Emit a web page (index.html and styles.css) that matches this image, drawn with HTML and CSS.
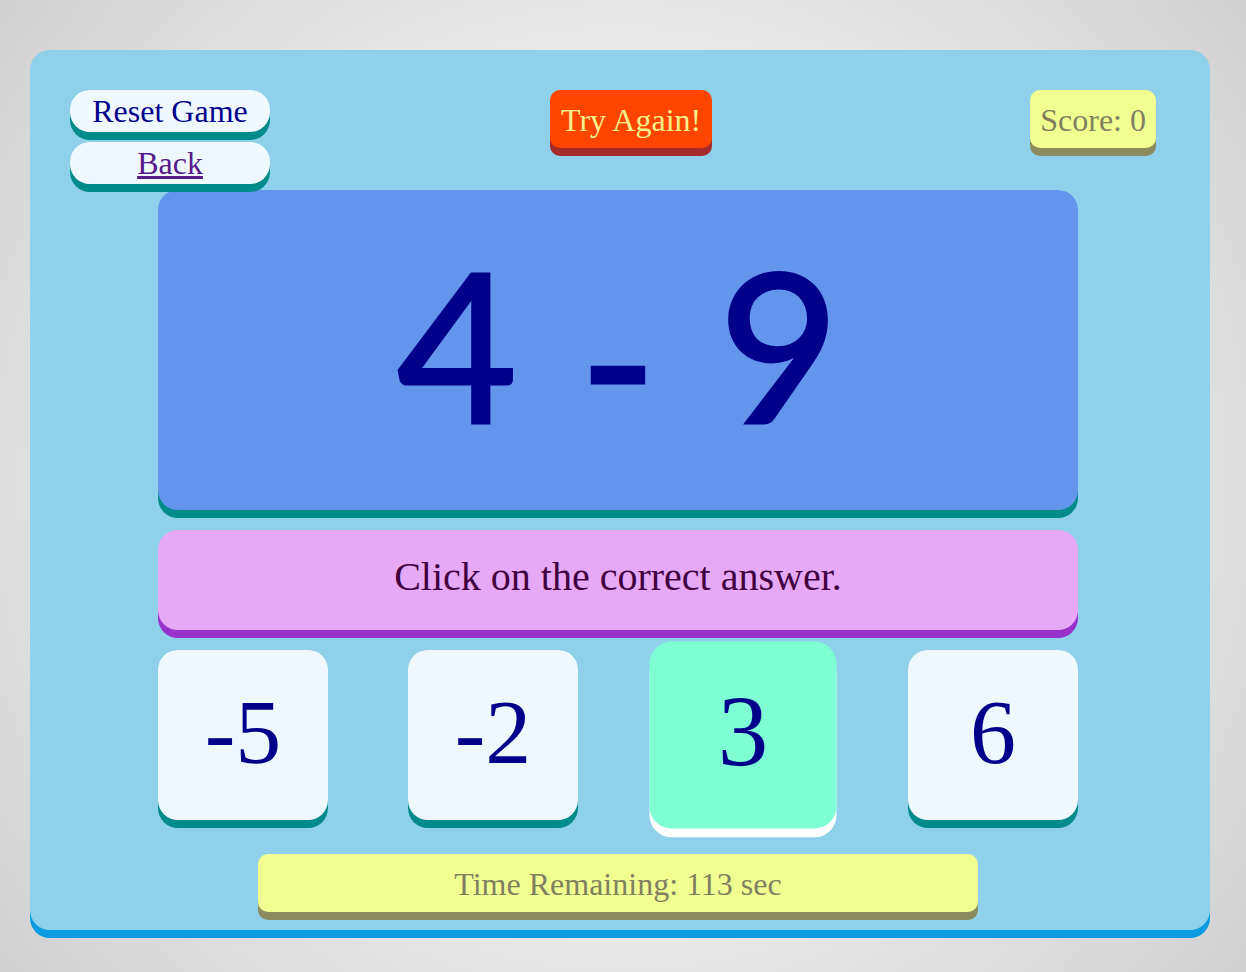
FILE: index.html
```html
<!DOCTYPE html>
<html lang="en">
<head>
  <meta charset="UTF-8">
  <meta name="viewport" content="width=device-width, initial-scale=1.0">
  <title>Subtraction Game</title>
  <link rel="stylesheet" href="styles.css">
</head>
<body>
  <div class="game-panel">
    <div class="top-row">
      <div class="nav-buttons">
        <div class="nav-button">Reset Game</div>
        <a class="nav-button back-link" href="#">Back</a>
      </div>
      <div class="try-again">Try Again!</div>
      <div class="score">Score: 0</div>
    </div>

    <div class="stage">
      <div class="question"><span>4</span><span class="operator">-</span><span>9</span></div>
      <div class="message">Click on the correct answer.</div>
      <div class="answers">
        <div class="answer">-5</div>
        <div class="answer">-2</div>
        <div class="answer selected">3</div>
        <div class="answer">6</div>
      </div>
      <div class="timer">Time Remaining: 113 sec</div>
    </div>
  </div>
</body>
</html>
```

FILE: styles.css
```css
* {
  margin: 0;
  padding: 0;
  box-sizing: border-box;
}

body {
  height: 972px;
  overflow: hidden;
  padding: 50px 36px 0 30px;
  background: radial-gradient(circle, #ffffff 18%, #d0d0d0 100%);
  font-family: "Liberation Serif", "Times New Roman", serif;
  color: #00008b;
}

.game-panel {
  width: 1180px;
  height: 880px;
  padding: 40px 54px 18px 40px;
  background: #8fd1ea;
  border-radius: 20px;
  box-shadow: 0 8px 0 #0a9be2;
}

.top-row {
  display: flex;
  align-items: flex-start;
  height: 100px;
}

.nav-buttons {
  display: flex;
  flex-direction: column;
  gap: 10px;
  width: 200px;
}

.nav-button {
  display: block;
  height: 42px;
  line-height: 43px;
  text-align: center;
  font-size: 32px;
  background: #f0f8ff;
  border-radius: 20px;
  box-shadow: 0 8px 0 #008b8b;
}

.back-link {
  color: #551a8b;
}

.try-again,
.score {
  height: 58px;
  line-height: 60px;
  font-size: 32px;
  border-radius: 10px;
}

.try-again {
  margin-left: 280px;
  padding: 0 11px;
  color: #f6f08c;
  background: #ff4500;
  box-shadow: 0 8px 0 #a52a2a;
}

.score {
  margin-left: auto;
  padding: 0 10px;
  color: #808060;
  background: #f0ff90;
  box-shadow: 0 8px 0 #8b8b5f;
}

.stage {
  width: 920px;
  margin-left: 88px;
}

.question {
  display: flex;
  justify-content: center;
  gap: 62px;
  height: 320px;
  line-height: 306px;
  margin-bottom: 20px;
  font-family: "Lato", "Comic Sans MS", sans-serif;
  font-size: 208px;
  -webkit-text-stroke: 3px #00008b;
  background: #6495ed;
  border-radius: 20px;
  box-shadow: 0 8px 0 #008b8b;
}

.operator {
  padding-top: 14px;
}

.message {
  height: 100px;
  line-height: 94px;
  margin-bottom: 20px;
  text-align: center;
  font-size: 40px;
  color: #400040;
  background: #e7a9f6;
  border-radius: 20px;
  box-shadow: 0 8px 0 #9932cc;
}

.answers {
  display: flex;
  justify-content: space-between;
  margin-bottom: 34px;
}

.answer {
  width: 170px;
  height: 170px;
  line-height: 164px;
  text-align: center;
  font-size: 92px;
  background: #f0f8ff;
  border-radius: 20px;
  box-shadow: 0 8px 0 #008b8b;
}

.answer.selected {
  background: #7fffd4;
  box-shadow: 0 8px 0 #ffffff;
  transform: scale(1.1);
}

.timer {
  width: 720px;
  height: 58px;
  line-height: 60px;
  margin: 0 auto;
  text-align: center;
  font-size: 32px;
  color: #808060;
  background: #f0ff90;
  border-radius: 10px;
  box-shadow: 0 8px 0 #8b8b5f;
}
```
